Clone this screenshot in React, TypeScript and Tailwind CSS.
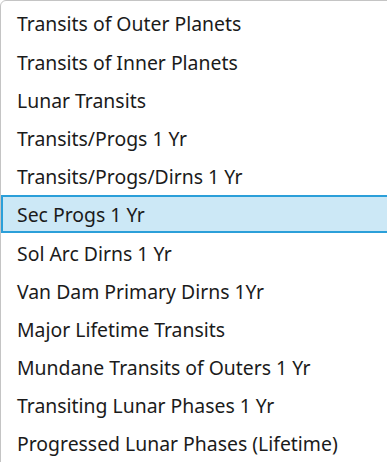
const ITEMS = [
  "Transits of Outer Planets",
  "Transits of Inner Planets",
  "Lunar Transits",
  "Transits/Progs 1 Yr",
  "Transits/Progs/Dirns 1 Yr",
  "Sec Progs 1 Yr",
  "Sol Arc Dirns 1 Yr",
  "Van Dam Primary Dirns 1Yr",
  "Major Lifetime Transits",
  "Mundane Transits of Outers 1 Yr",
  "Transiting Lunar Phases 1 Yr",
  "Progressed Lunar Phases (Lifetime)",
];

const SELECTED = "Sec Progs 1 Yr";

export default function App() {
  return (
    <div className="h-[462px] w-[387px] overflow-hidden bg-white">
      <ul
        className="-mr-2 flex w-[395px] flex-col rounded-md border border-[#c4c4c4] bg-white pt-[3px] pb-2 text-[19.4px] leading-none text-[#1b1b1b]"
        style={{ fontFamily: '"Noto Sans", "Open Sans", sans-serif' }}
      >
        {ITEMS.map((item) => (
          <li
            key={item}
            className={
              item === SELECTED
                ? "flex h-[38.2px] items-center border-2 border-[#2b9fd9] bg-[#cce8f6] pt-[2px] pl-[14px]"
                : "flex h-[38.2px] items-center border-2 border-transparent pt-[2px] pl-[14px]"
            }
          >
            {item}
          </li>
        ))}
      </ul>
    </div>
  );
}
